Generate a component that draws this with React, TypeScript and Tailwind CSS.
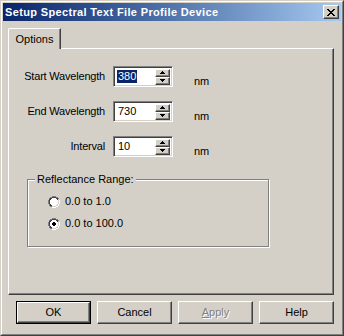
const font = { fontFamily: '"Liberation Sans", Arial, sans-serif' };

const fields = [
  { label: 'Start Wavelength', value: '380', selected: true },
  { label: 'End Wavelength', value: '730', selected: false },
  { label: 'Interval', value: '10', selected: false },
];

const bevel =
  'border border-t-white border-l-white border-r-[#404040] border-b-[#404040] shadow-[inset_-1px_-1px_#808080]';
const sunken =
  'border border-t-[#808080] border-l-[#808080] border-r-white border-b-white shadow-[inset_1px_1px_#404040,inset_-1px_-1px_#d4d0c8]';

function Spinner() {
  return (
    <div className="flex flex-col">
      {[0, 1].map((i) => (
        <div key={i} className={`w-[15px] h-[8px] bg-[#d4d0c8] flex items-center justify-center ${bevel}`}>
          <svg width="5" height="3" viewBox="0 0 5 3">
            {i === 0 ? <path d="M2 0h1v1h1v1h1v1H0V2h1V1h1z" fill="#000" /> : <path d="M0 0h5v1H4v1H3v1H2V2H1V1H0z" fill="#000" />}
          </svg>
        </div>
      ))}
    </div>
  );
}

function Radio({ checked }: { checked: boolean }) {
  return (
    <svg width="12" height="12" viewBox="0 0 12 12">
      <path d="M4 0h4v1h2v1h1v2h1v4h-1v2h-1v1H8v1H4v-1H2v-1H1V8H0V4h1V2h1V1h2z" fill="#808080" />
      <path d="M11 4h1v4h-1v2h-1v1H8v1H4v-1h4v-1h2V8h1z" fill="#fff" />
      <path d="M4 1h4v1h2v1h1v5h-1v2H8v1H4v-1H2V8H1V3h1V2h2z" fill="#404040" />
      <path d="M10 3h1v5h-1v2H8v1H4v-1h4V8h2z" fill="#d4d0c8" />
      <path d="M4 2h4v1h1v1h1v4H9v1H8v1H4V9H3V8H2V4h1V3h1z" fill="#fff" />
      {checked && <path d="M5 4h2v1h1v2H7v1H5V7H4V5h1z" fill="#000" />}
    </svg>
  );
}

export default function App() {
  return (
    <div
      style={font}
      className="w-[344px] h-[336px] bg-[#d4d0c8] border border-t-[#d4d0c8] border-l-[#d4d0c8] border-r-[#404040] border-b-[#404040] text-[11px] leading-[13px] text-black"
    >
      <div className="h-full border border-t-white border-l-white border-r-[#808080] border-b-[#808080] p-px flex flex-col">
        <div className="h-[18px] flex items-center justify-between pl-[2px] pr-[2px] bg-gradient-to-r from-[#0a246a] to-[#a6caf0]">
          <span className="text-white font-bold text-[11px] tracking-[0.35px]">Setup Spectral Text File Profile Device</span>
          <div className={`w-[16px] h-[14px] bg-[#d4d0c8] flex items-center justify-center ${bevel}`}>
            <svg width="8" height="7" viewBox="0 0 8 7">
              <path d="M0 0h2v1h1v1h2V1h1V0h2v1H7v1H6v1H5v1h1v1h1v1h1v1H6V6H5V5H3v1H2v1H0V6h1V5h1V4h1V3H2V2H1V1H0z" fill="#000" />
            </svg>
          </div>
        </div>

        <div className="flex flex-col pl-[5px] pt-[7px]">
          <div className="relative z-10 -mb-px w-[53px] h-[21px] bg-[#d4d0c8] border-l border-t border-l-white border-t-white border-r border-r-[#404040] shadow-[inset_-1px_0_#808080] rounded-tl-[2px] flex items-center justify-center pt-px">
            Options
          </div>
          <div className={`w-[326px] h-[247px] ${bevel} pt-[17px] pl-[14px]`}>
            <div className="flex flex-col gap-[14px]">
              {fields.map((f) => (
                <div key={f.label} className="flex items-start h-[21px]">
                  <span className="w-[82px] h-[21px] flex items-center justify-end text-right whitespace-nowrap tracking-[-0.2px]">
                    {f.label}
                  </span>
                  <div className={`ml-[8px] w-[60px] h-[21px] bg-white flex items-center justify-between pl-[3px] pr-[2px] ${sunken}`}>
                    <span className={f.selected ? 'bg-[#0a246a] text-white px-px' : 'px-px'}>{f.value}</span>
                    <Spinner />
                  </div>
                  <span className="ml-[21px] pt-[9px]">nm</span>
                </div>
              ))}
            </div>
            <div className="relative mt-[22px] ml-[4px] w-[242px] h-[68px] border border-[#808080] shadow-[inset_1px_1px_#fff,1px_1px_#fff] pt-[15px] pl-[20px] flex flex-col gap-[9px]">
              <span className="absolute -top-[7px] left-[7px] bg-[#d4d0c8] px-[2px]">Reflectance Range:</span>
              <div className="flex items-center gap-[5px]">
                <Radio checked={false} />
                <span>0.0 to 1.0</span>
              </div>
              <div className="flex items-center gap-[5px]">
                <Radio checked={true} />
                <span>0.0 to 100.0</span>
              </div>
            </div>
          </div>
        </div>

        <div className="flex gap-[6px] pl-[13px] pt-[6px]">
          <div className="w-[75px] h-[23px] border border-black">
            <div className={`h-full bg-[#d4d0c8] flex items-center justify-center ${bevel}`}>OK</div>
          </div>
          <div className={`w-[75px] h-[23px] bg-[#d4d0c8] flex items-center justify-center ${bevel}`}>Cancel</div>
          <div className={`w-[75px] h-[23px] bg-[#d4d0c8] flex items-center justify-center ${bevel} text-[#808080] [text-shadow:1px_1px_#fff]`}>
            <span><span className="underline">A</span>pply</span>
          </div>
          <div className={`w-[75px] h-[23px] bg-[#d4d0c8] flex items-center justify-center ${bevel}`}>Help</div>
        </div>
      </div>
    </div>
  );
}
